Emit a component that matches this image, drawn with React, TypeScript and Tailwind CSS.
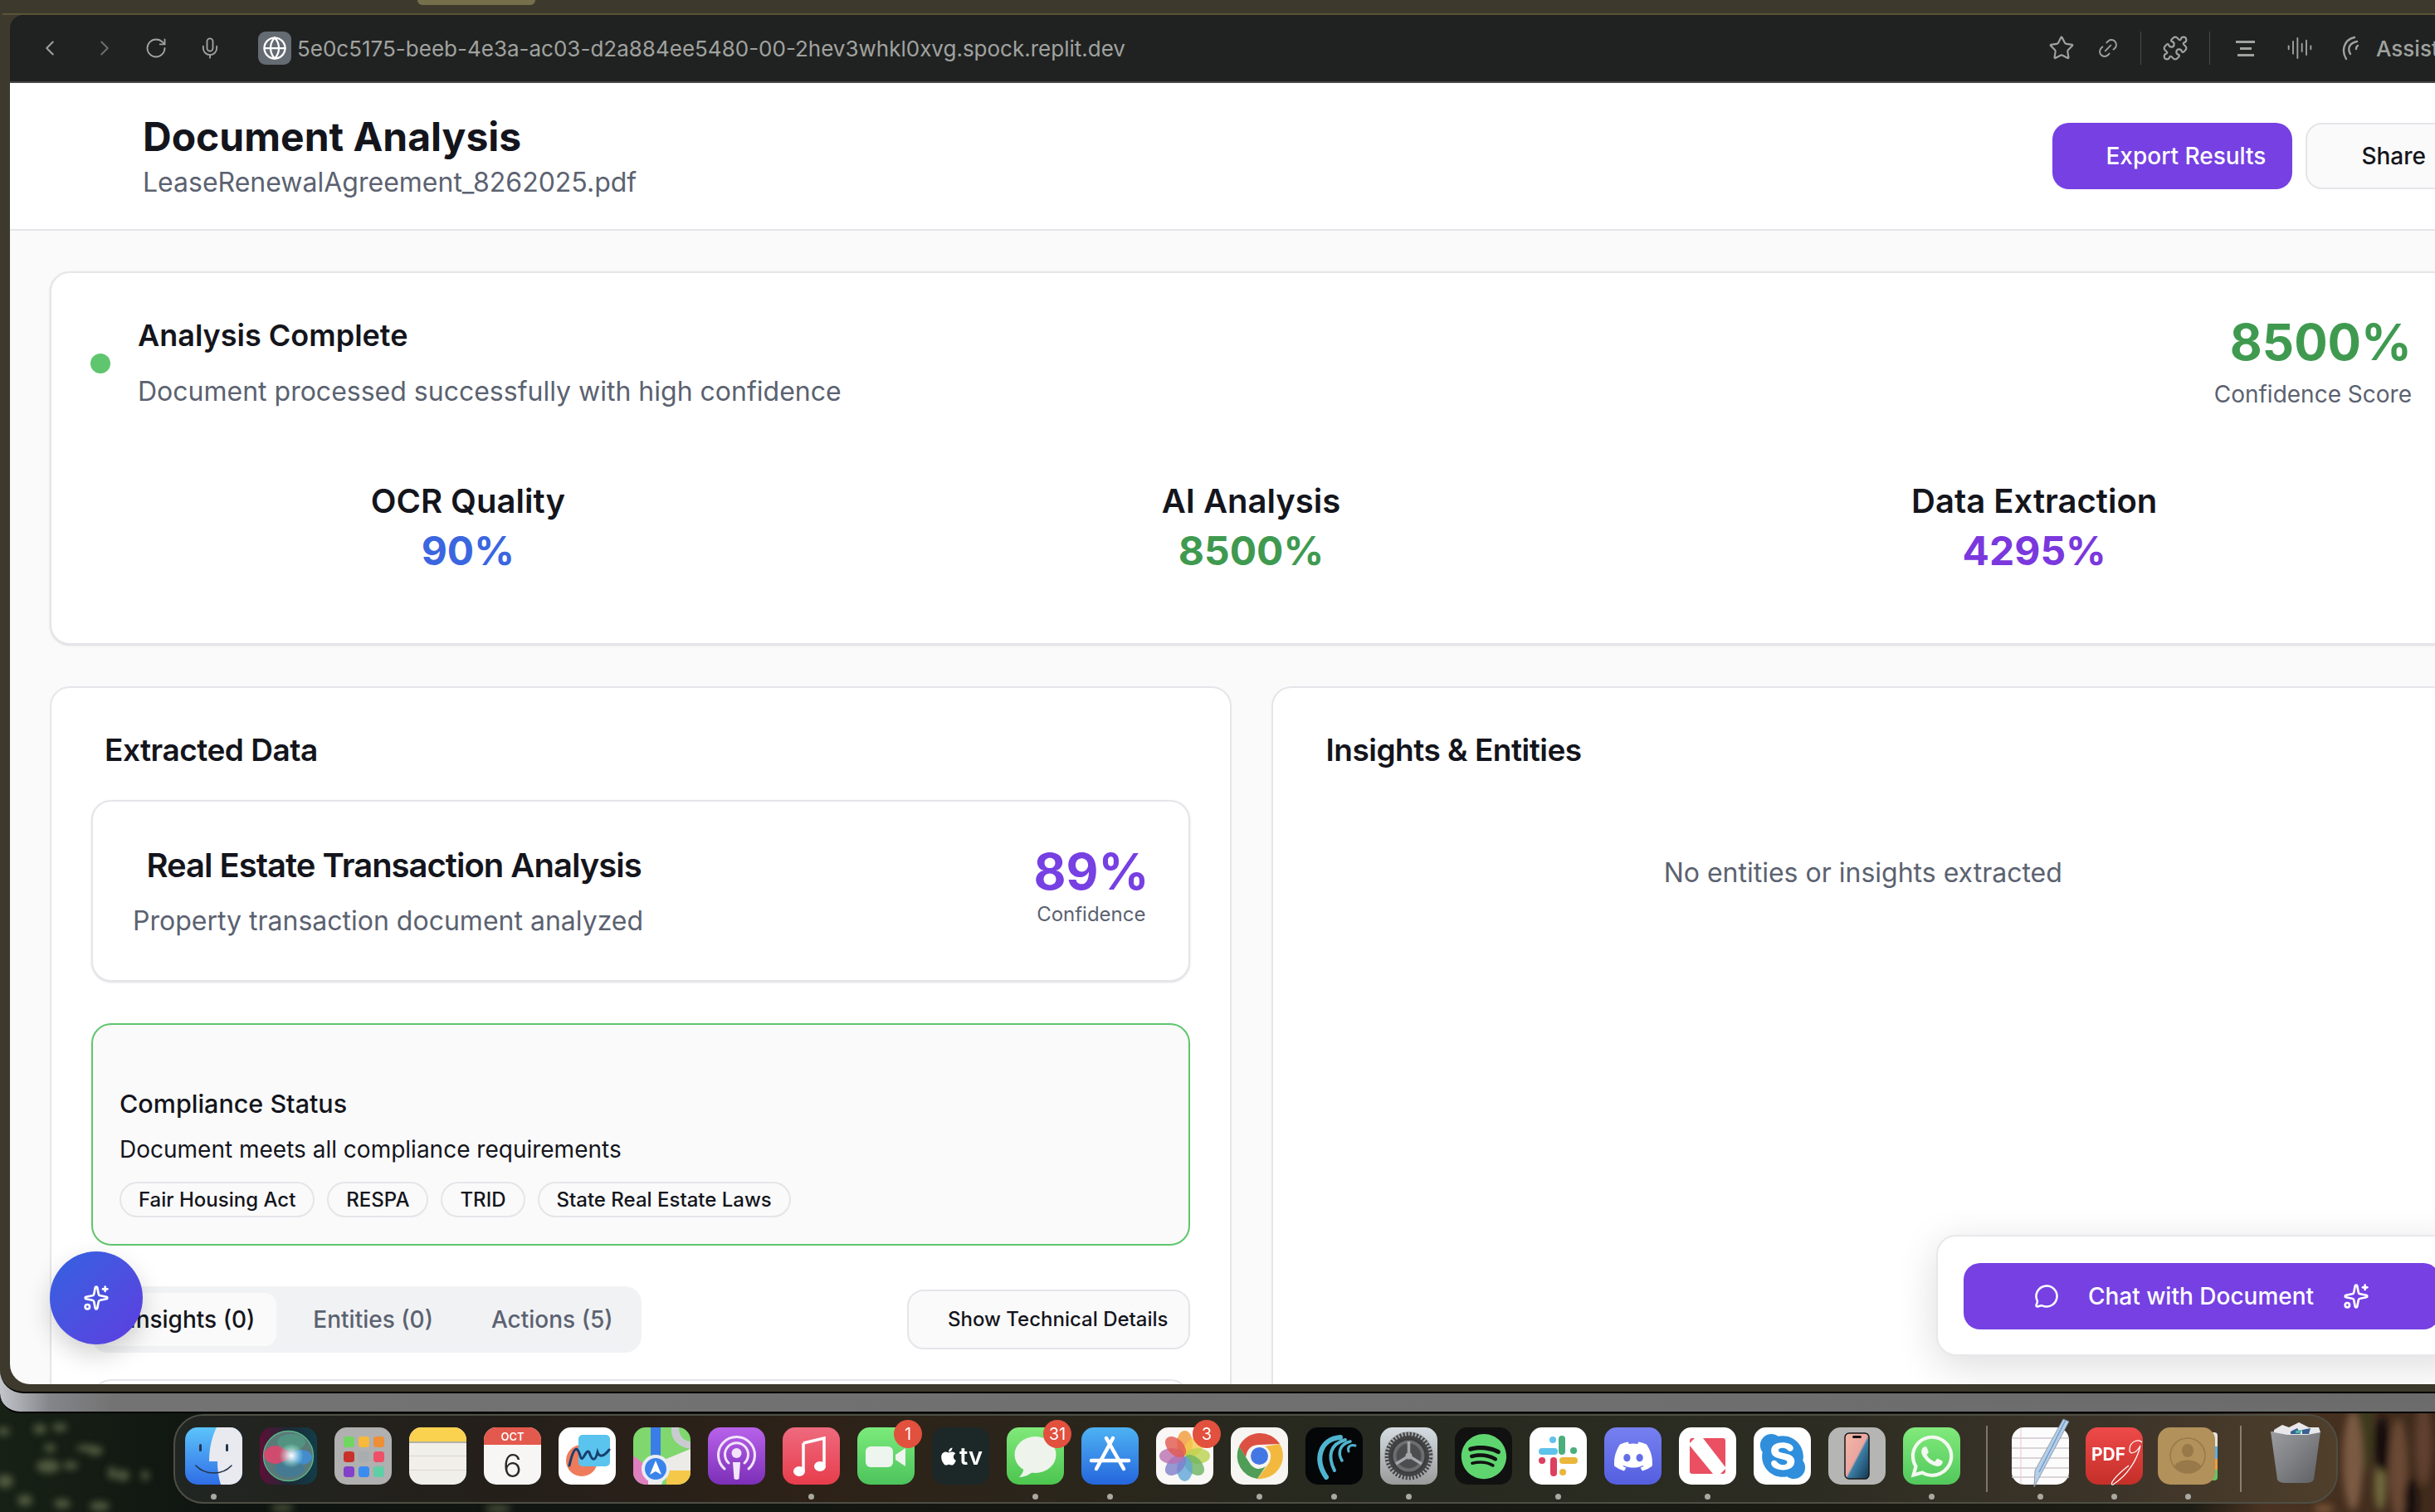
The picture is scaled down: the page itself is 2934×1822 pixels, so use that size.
import { FC, ReactNode } from "react";
import { AudioLines, ChevronLeft, ChevronRight, Globe, Link2, MessageCircle, Mic, Puzzle, RotateCw, Sparkles, Star } from "lucide-react";
import { FaApple, FaDiscord, FaSkype, FaSpotify, FaWhatsapp } from "react-icons/fa";

const Metric: FC<{ label: string; value: string; color: string }> = ({ label, value, color }) => (
  <div className="flex flex-col items-center">
    <div className="text-[40px] leading-[52px] font-semibold text-[#14151c]">{label}</div>
    <div className={`mt-[4px] text-[48px] leading-[60px] font-bold ${color}`}>{value}</div>
  </div>
);

const Chip: FC<{ children: ReactNode }> = ({ children }) => (
  <div className="h-[43px] px-[21px] flex items-center rounded-full border-2 border-[#e5e5ea] bg-[#fafafa] text-[24px] font-medium text-[#14151c]">{children}</div>
);

const Squircle: FC<{ children: ReactNode; fill?: string; defs?: ReactNode }> = ({ children, fill = "#fff", defs }) => (
  <svg viewBox="0 0 69 69" className="w-[69px] h-[69px] block overflow-visible">
    {defs && <defs>{defs}</defs>}
    <rect width="69" height="69" rx="15" fill={fill} />
    {children}
  </svg>
);

const Finder = () => (
  <Squircle fill="url(#fin)" defs={<linearGradient id="fin" x1="0" y1="0" x2="0" y2="1"><stop offset="0" stopColor="#5cc4fb" /><stop offset="1" stopColor="#2f6de6" /></linearGradient>}>
    <path d="M38 0H54a15 15 0 0 1 15 15V54a15 15 0 0 1-15 15H43C40 60 39 50 39 41H29C29 26 32 12 38 0Z" fill="#e9eaf0" />
    <rect x="17" y="20" width="3" height="9" rx="1.5" fill="#27344a" />
    <rect x="49" y="20" width="3" height="9" rx="1.5" fill="#27344a" />
    <path d="M13 46C24 58 45 58 56 46" fill="none" stroke="#27344a" strokeWidth="1.6" strokeLinecap="round" />
  </Squircle>
);

const Siri = () => (
  <Squircle fill="url(#sir)" defs={<><linearGradient id="sir" x1="0" y1="0" x2="1" y2="0"><stop offset="0" stopColor="#5e0f36" /><stop offset="0.5" stopColor="#1c2a35" /><stop offset="1" stopColor="#113d48" /></linearGradient><radialGradient id="sirg"><stop offset="0" stopColor="#fff" /><stop offset="0.35" stopColor="#e6f4ff" stopOpacity="0.7" /><stop offset="1" stopColor="#8fd" stopOpacity="0" /></radialGradient></>}>
    <circle cx="34.5" cy="34.5" r="30" fill="#5a7a78" stroke="#58b58c" strokeWidth="1.4" />
    <ellipse cx="20" cy="33" rx="15" ry="11" fill="#e5436c" opacity="0.85" />
    <ellipse cx="50" cy="36" rx="13" ry="9" fill="#3f8fdc" opacity="0.85" />
    <ellipse cx="36" cy="50" rx="18" ry="10" fill="#3c7c9c" opacity="0.7" />
    <ellipse cx="38" cy="18" rx="17" ry="10" fill="#4ca286" opacity="0.6" />
    <circle cx="38" cy="34" r="15" fill="url(#sirg)" />
  </Squircle>
);

const Launchpad = () => {
  const colors = ["#6fd75f", "#f6b93b", "#ee8f36", "#c7322a", "#a8aeb0", "#ee5068", "#8340c8", "#3b8cf0", "#5fcfa6"];
  return (
    <Squircle fill="#b0b0b0">
      {colors.map((c, i) => (
        <rect key={c} x={11 + (i % 3) * 18} y={11 + Math.floor(i / 3) * 18} width="13" height="13" rx="3.5" fill={c} />
      ))}
    </Squircle>
  );
};

const Notes = () => (
  <Squircle fill="#f1efe9">
    <path d="M0 17V15A15 15 0 0 1 15 0H54A15 15 0 0 1 69 15V17Z" fill="#fbd24f" />
    <rect y="17" width="69" height="2" fill="#b4b0a6" />
    <rect y="34" width="69" height="1" fill="#d9d6cf" />
    <rect y="51" width="69" height="1" fill="#d9d6cf" />
  </Squircle>
);

const Calendar = () => (
  <Squircle fill="#f7f6f4">
    <path d="M0 21V15A15 15 0 0 1 15 0H54A15 15 0 0 1 69 15V21Z" fill="#e4594d" />
    <text x="34.5" y="16" textAnchor="middle" fontSize="13" fontWeight="600" fill="#fff" fontFamily="Inter, sans-serif">OCT</text>
    <text x="34.5" y="60" textAnchor="middle" fontSize="38" fontWeight="300" fill="#2a2a2a" fontFamily="Inter, sans-serif">6</text>
  </Squircle>
);

const Freeform = () => (
  <Squircle fill="#fff">
    <circle cx="28" cy="40" r="19" fill="#ee7b5c" />
    <rect x="24" y="9" width="38" height="38" rx="5" fill="#5ac4ee" />
    <path d="M13 46C19 20 23 24 26 34C29 46 33 24 37 30C40 40 44 42 47 30C49 36 54 36 61 27" fill="none" stroke="#173f6e" strokeWidth="3" strokeLinecap="round" />
  </Squircle>
);

const Maps = () => (
  <Squircle fill="#7fd76e">
    <path d="M0 34L18 48V69H15A15 15 0 0 1 0 54Z" fill="#e07fc0" />
    <path d="M40 52H69V54A15 15 0 0 1 54 69H40Z" fill="#f5c84a" />
    <path d="M30 42L69 26V52H40L34 69H18V48Z" fill="#ecebe8" />
    <path d="M46 0V4C46 16 56 24 69 26V17C60 16 55 10 55 0Z" fill="#c9cbd1" />
    <rect x="21" y="0" width="12" height="38" fill="#3a7ce8" />
    <circle cx="27" cy="50" r="17" fill="#e9edf4" />
    <circle cx="27" cy="50" r="13" fill="#3a83ea" />
    <path d="M27 40L34 57L27 53L20 57Z" fill="#fff" />
  </Squircle>
);

const Podcasts = () => (
  <Squircle fill="url(#pod)" defs={<linearGradient id="pod" x1="0" y1="0" x2="0" y2="1"><stop offset="0" stopColor="#b862ea" /><stop offset="1" stopColor="#7c2fb8" /></linearGradient>}>
    <g fill="none" stroke="#f3e6fb" strokeWidth="3" strokeLinecap="round">
      <path d="M20 50A22 22 0 1 1 49 50" />
      <path d="M25 43A14 14 0 1 1 44 43" />
    </g>
    <circle cx="34.5" cy="31" r="6" fill="#f3e6fb" />
    <path d="M30 42H39L37.5 62Q34.5 64 31.5 62Z" fill="#f3e6fb" />
  </Squircle>
);

const Music = () => (
  <Squircle fill="url(#mus)" defs={<linearGradient id="mus" x1="0" y1="0" x2="0" y2="1"><stop offset="0" stopColor="#ef6a7e" /><stop offset="1" stopColor="#e73d4c" /></linearGradient>}>
    <path d="M25 19L50 13V45" fill="none" stroke="#fff" strokeWidth="3.5" />
    <path d="M25 19V52" fill="none" stroke="#fff" strokeWidth="3.5" />
    <ellipse cx="20" cy="53" rx="7" ry="6" fill="#fff" />
    <ellipse cx="45" cy="47" rx="7" ry="6" fill="#fff" />
  </Squircle>
);

const FaceTime = () => (
  <Squircle fill="url(#ft)" defs={<linearGradient id="ft" x1="0" y1="0" x2="0" y2="1"><stop offset="0" stopColor="#7bea7b" /><stop offset="1" stopColor="#4cc45c" /></linearGradient>}>
    <rect x="10" y="23" width="33" height="25" rx="6" fill="#eef4ee" />
    <path d="M46 33L58 25V47L46 39Z" fill="#eef4ee" />
  </Squircle>
);

const TV = () => (
  <Squircle fill="#1c2727">
    <foreignObject x="0" y="0" width="69" height="69">
      <div className="w-[69px] h-[69px] flex items-center justify-center gap-[1px] text-white text-[29px] font-semibold leading-none">
        <FaApple className="w-[24px] h-[24px]" />
        <span>tv</span>
      </div>
    </foreignObject>
  </Squircle>
);

const Messages = () => (
  <Squircle fill="url(#ms)" defs={<linearGradient id="ms" x1="0" y1="0" x2="0" y2="1"><stop offset="0" stopColor="#80e97a" /><stop offset="1" stopColor="#4cc54f" /></linearGradient>}>
    <ellipse cx="34.5" cy="33" rx="25" ry="22" fill="#eef3ec" />
    <path d="M21 48C20 54 18 57 15 60C22 60 27 57 31 54Z" fill="#eef3ec" />
  </Squircle>
);

const AppStore = () => (
  <Squircle fill="url(#as)" defs={<linearGradient id="as" x1="0" y1="0" x2="0" y2="1"><stop offset="0" stopColor="#4db2f3" /><stop offset="1" stopColor="#2566dd" /></linearGradient>}>
    <g stroke="#fff" strokeWidth="4.5" strokeLinecap="round">
      <path d="M38 13L18 50" />
      <path d="M30 13L51 50" />
      <path d="M12 40H57" />
    </g>
  </Squircle>
);

const Photos = () => {
  const petals = ["#f29a3a", "#f5c94c", "#b9d24e", "#6cb35f", "#5fa5d8", "#7d7ecb", "#b96fb2", "#e2574f"];
  return (
    <Squircle fill="#f9f8f6">
      {petals.map((c, i) => (
        <ellipse key={c} cx="34.5" cy="19" rx="9.5" ry="15" fill={c} opacity="0.8" transform={`rotate(${i * 45} 34.5 34.5)`} />
      ))}
    </Squircle>
  );
};

const Chrome = () => (
  <Squircle fill="#f6f5f2">
    <path d="M10 23A28 28 0 0 1 59 20L34.5 21Q20 21 18 36Z" fill="#dd5142" />
    <path d="M10 23L24 45Q32 54 42 47L32 62A28 28 0 0 1 10 23Z" fill="#4f9d56" />
    <path d="M59 20A28 28 0 0 1 32 62L46 43Q52 30 41 23Z" fill="#f3b93f" />
    <circle cx="34.5" cy="34.5" r="13" fill="#f6f5f2" />
    <circle cx="34.5" cy="34.5" r="10.5" fill="#4378e4" />
  </Squircle>
);

const Wave = () => (
  <Squircle fill="#050608">
    <g fill="none" stroke="#4fb4cf" strokeLinecap="round">
      <path d="M25 60C10 38 18 14 42 12" strokeWidth="6" />
      <path d="M35 52C26 34 30 20 48 15" strokeWidth="4" />
      <path d="M44 40C38 30 42 20 54 17" strokeWidth="3.5" />
      <path d="M52 29C50 24 54 20 60 22" strokeWidth="3" />
    </g>
  </Squircle>
);

const Settings = () => (
  <Squircle fill="url(#set)" defs={<linearGradient id="set" x1="0" y1="0" x2="0" y2="1"><stop offset="0" stopColor="#d5dde2" /><stop offset="1" stopColor="#9a9a9a" /></linearGradient>}>
    <circle cx="34.5" cy="34.5" r="29" fill="#414345" />
    <circle cx="34.5" cy="34.5" r="27" fill="none" stroke="#a7a9ab" strokeWidth="5" strokeDasharray="2 2.2" />
    <circle cx="34.5" cy="34.5" r="20" fill="#6b6d6f" stroke="#3a3b3d" strokeWidth="2" />
    <circle cx="34.5" cy="34.5" r="15" fill="#4b4d4f" />
    <g stroke="#a5a7a9" strokeWidth="3.5">
      <path d="M34.5 34.5V17" />
      <path d="M34.5 34.5L50 44" />
      <path d="M34.5 34.5L19 44" />
    </g>
    <circle cx="34.5" cy="34.5" r="4" fill="#a5a7a9" />
  </Squircle>
);

const Spotify = () => (
  <Squircle fill="#111">
    <foreignObject x="0" y="0" width="69" height="69">
      <div className="w-[69px] h-[69px] flex items-center justify-center text-[#5fd56f]"><FaSpotify className="w-[56px] h-[56px]" /></div>
    </foreignObject>
  </Squircle>
);

const Slack = () => (
  <Squircle fill="#fff">
    <g strokeLinecap="round" strokeWidth="8" fill="none">
      <path d="M15 29H30" stroke="#5fc2ea" />
      <path d="M28 15V15.1" stroke="#5fc2ea" />
      <path d="M39 14V29" stroke="#4aae7d" />
      <path d="M53 28H53.1" stroke="#4aae7d" />
      <path d="M40 40H54" stroke="#eab63c" />
      <path d="M40 54H40.1" stroke="#eab63c" />
      <path d="M29 40V55" stroke="#dd3f5f" />
      <path d="M15 40H15.1" stroke="#dd3f5f" />
    </g>
  </Squircle>
);

const Discord = () => (
  <Squircle fill="url(#dis)" defs={<linearGradient id="dis" x1="0" y1="0" x2="0" y2="1"><stop offset="0" stopColor="#7680f0" /><stop offset="1" stopColor="#545fe0" /></linearGradient>}>
    <foreignObject x="0" y="0" width="69" height="69">
      <div className="w-[69px] h-[69px] flex items-center justify-center text-white"><FaDiscord className="w-[50px] h-[50px]" /></div>
    </foreignObject>
  </Squircle>
);

const News = () => (
  <Squircle fill="#fff">
    <rect x="13" y="13" width="43" height="43" rx="3" fill="#ea5062" />
    <path d="M13 19L19 13H29L56 48V50L50 56H41L13 22Z" fill="#fff" />
  </Squircle>
);

const Skype = () => (
  <Squircle fill="#fff">
    <foreignObject x="0" y="0" width="69" height="69">
      <div className="w-[69px] h-[69px] flex items-center justify-center text-[#2f8fdc]"><FaSkype className="w-[62px] h-[62px]" /></div>
    </foreignObject>
  </Squircle>
);

const Mirroring = () => (
  <Squircle fill="#b5b5b3" defs={<linearGradient id="mir" x1="0" y1="0" x2="1" y2="1"><stop offset="0" stopColor="#f5b7a4" /><stop offset="0.5" stopColor="#e9a6a0" /><stop offset="0.55" stopColor="#3c7fa6" /><stop offset="1" stopColor="#12344f" /></linearGradient>}>
    <rect x="20" y="7" width="29" height="55" rx="5" fill="url(#mir)" stroke="#16181b" strokeWidth="1.5" />
    <rect x="29" y="10" width="11" height="3" rx="1.5" fill="#111" />
  </Squircle>
);

const WhatsApp = () => (
  <Squircle fill="url(#wa)" defs={<linearGradient id="wa" x1="0" y1="0" x2="0" y2="1"><stop offset="0" stopColor="#81ea7b" /><stop offset="1" stopColor="#52c85c" /></linearGradient>}>
    <foreignObject x="0" y="0" width="69" height="69">
      <div className="w-[69px] h-[69px] flex items-center justify-center text-[#f3f8f0]"><FaWhatsapp className="w-[58px] h-[58px]" /></div>
    </foreignObject>
  </Squircle>
);

const TextEdit = () => (
  <Squircle fill="#fdfcfd">
    <g stroke="#cfc6cc" strokeWidth="1.3">
      <path d="M0 13H69M0 25H69M0 37H69M0 49H69M0 60H69" />
    </g>
    <path d="M11 0V69" stroke="#edc6cc" strokeWidth="1" />
    <path d="M62 -10L69 -7L36 55L27 72L28 52Z" fill="#b6cfe6" stroke="#7d8b9b" strokeWidth="0.8" />
    <path d="M65 -9L33 54" stroke="#6f9dd0" strokeWidth="1.5" />
  </Squircle>
);

const PdfIcon = () => (
  <Squircle fill="url(#pdf)" defs={<linearGradient id="pdf" x1="0" y1="0" x2="0" y2="1"><stop offset="0" stopColor="#ee4a4a" /><stop offset="1" stopColor="#c42f28" /></linearGradient>}>
    <text x="7" y="40" fontSize="21" fontWeight="700" fill="#fff" fontFamily="Inter, sans-serif">PDF</text>
    <path d="M68 18C64 14 54 16 53 26C52 33 60 33 66 22C62 40 50 58 33 69C28 70 34 60 52 46" fill="none" stroke="#fff" strokeWidth="1.2" />
  </Squircle>
);

const Contacts = () => (
  <div className="relative w-[72px] h-[69px]">
    <div className="absolute right-0 top-[6px] w-[10px] h-[58px] rounded-r-[4px] bg-[linear-gradient(180deg,#e6e2da_0_30%,#5aaee8_30%_55%,#ef9a3d_55%_78%,#66c266_78%)]" />
    <svg viewBox="0 0 69 69" className="absolute left-0 top-0 w-[69px] h-[69px]">
      <rect width="69" height="69" rx="15" fill="#b3915a" />
      <circle cx="36" cy="34" r="21" fill="none" stroke="#98794a" strokeWidth="1.5" />
      <ellipse cx="36" cy="28" rx="7" ry="8" fill="#98794a" />
      <path d="M20 47C24 37 48 37 52 47C47 57 25 57 20 47Z" fill="#98794a" />
    </svg>
  </div>
);

const Trash = () => (
  <svg viewBox="0 0 61 78" className="w-[61px] h-[78px] block -mt-[9px]">
    <defs>
      <linearGradient id="trash" x1="0" y1="0" x2="1" y2="1"><stop offset="0" stopColor="#9b9ea1" /><stop offset="0.5" stopColor="#7d7f82" /><stop offset="1" stopColor="#5d5f62" /></linearGradient>
    </defs>
    <path d="M0 14H60L52 72Q50 76 42 76H18Q10 76 8 72Z" fill="url(#trash)" />
    <path d="M4 12L14 6L22 9L34 3L46 9L58 9L60 15L44 18L20 18L4 15Z" fill="#e8e8ea" />
    <path d="M24 14L32 10L36 17H24ZM38 12L48 10L46 17H38Z" fill="#3a5f92" />
    <path d="M30 13L38 12L36 16H30Z" fill="#4bb6a4" />
  </svg>
);

const dock = [
  { key: "finder", icon: <Finder />, dot: true },
  { key: "siri", icon: <Siri /> },
  { key: "launchpad", icon: <Launchpad /> },
  { key: "notes", icon: <Notes /> },
  { key: "calendar", icon: <Calendar /> },
  { key: "freeform", icon: <Freeform /> },
  { key: "maps", icon: <Maps /> },
  { key: "podcasts", icon: <Podcasts /> },
  { key: "music", icon: <Music />, dot: true },
  { key: "facetime", icon: <FaceTime />, badge: "1" },
  { key: "tv", icon: <TV /> },
  { key: "messages", icon: <Messages />, dot: true, badge: "31" },
  { key: "appstore", icon: <AppStore />, dot: true },
  { key: "photos", icon: <Photos />, badge: "3" },
  { key: "chrome", icon: <Chrome />, dot: true },
  { key: "wave", icon: <Wave />, dot: true },
  { key: "settings", icon: <Settings />, dot: true },
  { key: "spotify", icon: <Spotify /> },
  { key: "slack", icon: <Slack />, dot: true },
  { key: "discord", icon: <Discord /> },
  { key: "news", icon: <News />, dot: true },
  { key: "skype", icon: <Skype /> },
  { key: "mirroring", icon: <Mirroring /> },
  { key: "whatsapp", icon: <WhatsApp />, dot: true },
];

const DockItem: FC<{ icon: ReactNode; dot?: boolean; badge?: string }> = ({ icon, dot, badge }) => (
  <div className="relative flex flex-col items-center shrink-0">
    {icon}
    <div className={`mt-[11px] w-[7px] h-[7px] rounded-full ${dot ? "bg-[#a9a9a2]" : "bg-transparent"}`} />
    {badge && (
      <div className="absolute -top-[9px] -right-[9px] w-[34px] h-[34px] rounded-full bg-[#e2503e] text-white text-[20px] flex items-center justify-center">{badge}</div>
    )}
  </div>
);

const leaves = [
  [4, 1725, 8, 5], [48, 1722, 8, 6], [72, 1720, 9, 5], [60, 1745, 7, 5], [102, 1745, 10, 4], [115, 1748, 9, 6],
  [58, 1767, 14, 8], [85, 1766, 9, 5], [6, 1785, 10, 8], [135, 1775, 5, 8], [148, 1778, 8, 7], [175, 1778, 5, 6],
  [30, 1808, 9, 7], [75, 1812, 10, 6], [120, 1815, 12, 6], [340, 1817, 14, 4], [600, 1818, 16, 4],
];

const bark = [
  [2850, 1725, 9, 50, "#3d3a1f"], [2835, 1760, 12, 60, "#7a5a42"], [2890, 1770, 11, 60, "#6b4a36"], [2868, 1790, 7, 30, "#6f6a3c"],
  [2800, 1818, 12, 5, "#7a5638"], [2920, 1740, 10, 50, "#61402e"], [2870, 1740, 9, 34, "#120b08"], [2905, 1810, 8, 30, "#120b08"],
];

const Wallpaper = () => (
  <svg viewBox="0 0 2934 1822" className="absolute inset-0 w-full h-full">
    <defs>
      <filter id="soft" x="-50%" y="-50%" width="200%" height="200%"><feGaussianBlur stdDeviation="4" /></filter>
      <linearGradient id="wp" x1="0" y1="0" x2="1" y2="0">
        <stop offset="0" stopColor="#182116" />
        <stop offset="0.1" stopColor="#0e1410" />
        <stop offset="0.45" stopColor="#151812" />
        <stop offset="0.9" stopColor="#1d1c14" />
        <stop offset="0.93" stopColor="#4a3322" />
        <stop offset="1" stopColor="#3f2a1b" />
      </linearGradient>
    </defs>
    <rect width="2934" height="1822" fill="url(#wp)" />
    <g filter="url(#soft)">
      {leaves.map(([x, y, rx, ry]) => (
        <ellipse key={`${x}-${y}`} cx={x} cy={y} rx={rx} ry={ry} fill="#76825a" opacity="0.6" />
      ))}
    </g>
    <g filter="url(#soft)">
      {bark.map(([x, y, rx, ry, c]) => (
        <ellipse key={`${x}-${y}`} cx={x as number} cy={y as number} rx={rx as number} ry={ry as number} fill={c as string} />
      ))}
    </g>
  </svg>
);

const App: FC = () => {
  return (
    <div className="relative w-[2934px] h-[1822px] overflow-hidden bg-[#111511] [font-family:Inter,sans-serif]">
      <Wallpaper />

      <div className="relative h-[1703px] rounded-bl-[24px] border-b-2 border-black bg-[linear-gradient(90deg,#c2c5ca_0,#84858a_60px,#737373_135px,#6c6c6c_100%)]">
        <div className="h-[1679px] pl-[3px] rounded-bl-[28px] border-b-2 border-black bg-[#3d3a2d] flex flex-col">
          <div className="h-[16px] shrink-0 ml-[500px]">
            <div className="w-[142px] h-[6px] rounded-b-[8px] bg-[#75704a]" />
          </div>
          <div className="flex flex-1 min-h-0 flex-col pl-[9px] pb-[9px] border-t-2 border-[#5a5436]">
            {/* browser toolbar */}
            <div className="h-[82px] shrink-0 flex items-center rounded-tl-[16px] border-b-2 border-[#474847] bg-[#202221] text-[#a0a2a0]">
              <ChevronLeft className="ml-[33px] w-[30px] h-[34px] stroke-[1.6]" />
              <ChevronRight className="ml-[36px] w-[30px] h-[34px] stroke-[1.6] text-[#6c6e6c]" />
              <RotateCw className="ml-[33px] w-[28px] h-[30px] stroke-[1.6]" />
              <Mic className="ml-[37px] w-[28px] h-[34px] stroke-[1.6]" />
              <div className="ml-[44px] w-[40px] h-[40px] rounded-[9px] bg-[#656b72] flex items-center justify-center">
                <Globe className="w-[30px] h-[30px] text-white stroke-[1.8]" />
              </div>
              <div className="ml-[7px] text-[26px] text-[#a0a2a0] whitespace-nowrap">5e0c5175-beeb-4e3a-ac03-d2a884ee5480-00-2hev3whkl0xvg.spock.replit.dev</div>
              <div className="ml-auto flex items-center shrink-0">
                <Star className="w-[32px] h-[32px] stroke-[1.6]" />
                <Link2 className="ml-[26px] w-[28px] h-[28px] -rotate-45 stroke-[1.6]" />
                <div className="ml-[25px] w-[1px] h-[40px] bg-[#4a4b4a]" />
                <Puzzle className="ml-[25px] w-[32px] h-[32px] stroke-[1.6]" />
                <div className="ml-[25px] w-[1px] h-[40px] bg-[#4a4b4a]" />
                <div className="ml-[31px] w-[23px] flex flex-col items-center gap-[5px]">
                  <div className="w-[23px] h-[3px] bg-[#a0a2a0]" />
                  <div className="w-[14px] h-[3px] bg-[#a0a2a0]" />
                  <div className="w-[20px] h-[3px] bg-[#a0a2a0]" />
                </div>
                <AudioLines className="ml-[38px] w-[32px] h-[32px] stroke-[1.4]" />
                <svg viewBox="0 0 28 30" className="ml-[34px] w-[28px] h-[30px]" fill="none" stroke="#a0a2a0" strokeWidth="2.4" strokeLinecap="round">
                  <path d="M6 28C0 18 3 5 16 2" />
                  <path d="M11 22C7 15 10 9 19 7" />
                  <path d="M20 12C18 13 18 14 18 16" />
                </svg>
                <div className="ml-[14px] w-[71px] overflow-hidden text-[26px] font-medium whitespace-nowrap">Assistant</div>
              </div>
            </div>

            {/* page */}
            <div className="flex-1 min-h-0 overflow-hidden rounded-bl-[24px] bg-[#fafafa]">
              <div className="w-[2992px]">
                <header className="h-[178px] bg-white border-b-2 border-[#e5e5ea] flex items-center pl-[160px] pr-[47px]">
                  <div className="flex flex-col">
                    <h1 className="text-[48px] leading-[60px] font-bold text-[#14151c]">Document Analysis</h1>
                    <p className="mt-[3px] text-[32px] leading-[44px] text-[#5b6270]">LeaseRenewalAgreement_8262025.pdf</p>
                  </div>
                  <div className="ml-auto flex items-center gap-[16px]">
                    <button className="h-[80px] pl-[64px] pr-[32px] rounded-[20px] bg-[#7640e3] text-white text-[28px] font-medium">Export Results</button>
                    <button className="h-[80px] pl-[65px] pr-[32px] rounded-[20px] border-2 border-[#e5e5ea] bg-[#fafafa] text-[#14151c] text-[28px] font-medium">Share</button>
                  </div>
                </header>

                <main className="pl-[48px] pr-[49px] pt-[49px] flex flex-col gap-[50px]">
                  <section className="h-[450px] rounded-[24px] border-2 border-[#e5e5ea] bg-white shadow-sm px-[47px] pt-[49px]">
                    <div className="flex justify-between items-center">
                      <div className="flex items-center gap-[33px]">
                        <div className="w-[24px] h-[24px] rounded-full bg-[#5fc56e]" />
                        <div>
                          <div className="text-[36px] leading-[48px] font-semibold text-[#14151c]">Analysis Complete</div>
                          <div className="mt-[20px] text-[32px] leading-[48px] text-[#5b6270]">Document processed successfully with high confidence</div>
                        </div>
                      </div>
                      <div className="flex flex-col items-end -mt-[2px]">
                        <div className="text-[60px] leading-[72px] font-bold text-[#3f9a50]">8500%</div>
                        <div className="mt-[5px] text-[28px] leading-[44px] text-[#5b6270]">Confidence Score</div>
                      </div>
                    </div>
                    <div className="mt-[81px] grid grid-cols-3 gap-[34px]">
                      <Metric label="OCR Quality" value="90%" color="text-[#3b66e0]" />
                      <Metric label="AI Analysis" value="8500%" color="text-[#3f9a50]" />
                      <Metric label="Data Extraction" value="4295%" color="text-[#7a38dd]" />
                    </div>
                  </section>

                  <div className="grid grid-cols-2 gap-[48px]">
                    <section className="rounded-[24px] border-2 border-[#e5e5ea] bg-white pl-[48px] pr-[48px] pt-[51px]">
                      <h2 className="pl-[16px] text-[37px] leading-[48px] font-semibold text-[#14151c] tracking-[-0.5px]">Extracted Data</h2>

                      <div className="mt-[36px] h-[219px] rounded-[24px] border-2 border-[#e5e5ea] bg-white shadow-sm flex justify-between pl-[48px] pr-[51px] pt-[49px]">
                        <div className="text-center">
                          <div className="pl-[14px] text-[40px] leading-[56px] font-semibold text-[#14151c] tracking-[-1px]">Real Estate Transaction Analysis</div>
                          <div className="mt-[17px] text-[32px] leading-[44px] text-[#5b6270]">Property transaction document analyzed</div>
                        </div>
                        <div className="flex flex-col items-end -mt-[3px]">
                          <div className="-mr-[4px] text-[60px] leading-[76px] font-bold text-[#7640e3]">89%</div>
                          <div className="-mt-[4px] text-[24px] leading-[36px] text-[#5b6270]">Confidence</div>
                        </div>
                      </div>

                      <div className="mt-[50px] h-[268px] rounded-[24px] border-2 border-[#5fc56e] bg-[#fafafa] pl-[32px] pt-[73px]">
                        <div className="text-[30.5px] leading-[44px] font-medium text-[#14151c]">Compliance Status</div>
                        <div className="mt-[13px] text-[28px] leading-[40px] text-[#14151c]">Document meets all compliance requirements</div>
                        <div className="mt-[19px] flex gap-[15px]">
                          <Chip>Fair Housing Act</Chip>
                          <Chip>RESPA</Chip>
                          <Chip>TRID</Chip>
                          <Chip>State Real Estate Laws</Chip>
                        </div>
                      </div>

                      <div className="mt-[49px] flex items-center justify-between">
                        <div className="h-[80px] pl-[10px] pr-[8px] rounded-[20px] bg-[#f1f2f4] flex items-center gap-[18px] text-[28px] font-medium text-[#5b6270]">
                          <div className="h-[64px] pl-[36px] pr-[26px] flex items-center rounded-[14px] bg-[#fafafa] text-[#14151c]">Insights (0)</div>
                          <div className="px-[26px]">Entities (0)</div>
                          <div className="px-[26px]">Actions (5)</div>
                        </div>
                        <button className="h-[72px] pl-[47px] pr-[24px] rounded-[20px] border-2 border-[#e5e5ea] bg-[#fafafa] text-[24px] font-medium text-[#14151c]">Show Technical Details</button>
                      </div>

                      <div className="mt-[32px] h-[100px] rounded-t-[24px] border-2 border-[#e5e5ea] bg-white" />
                    </section>

                    <section className="rounded-[24px] border-2 border-[#e5e5ea] bg-white pl-[64px] pr-[50px] pt-[51px] pb-[900px]">
                      <h2 className="text-[37px] leading-[48px] font-semibold text-[#14151c] tracking-[-0.5px]">Insights &amp; Entities</h2>
                      <p className="mt-[100px] pr-[11px] text-center text-[32px] leading-[48px] text-[#5b6270]">No entities or insights extracted</p>
                    </section>
                  </div>
                </main>
              </div>
            </div>
          </div>
        </div>
      </div>

      {/* floating actions */}
      <div className="absolute left-[60px] top-[1508px] w-[112px] h-[112px] rounded-full bg-gradient-to-br from-[#2f62e0] to-[#5c3ce0] shadow-[0_12px_30px_rgba(0,0,0,0.18)] flex items-center justify-center">
        <Sparkles className="w-[32px] h-[32px] text-white" />
      </div>
      <div className="absolute left-[2333px] top-[1488px] w-[640px] h-[146px] rounded-[24px] border-2 border-[#e8e8ec] bg-white shadow-[0_12px_50px_rgba(0,0,0,0.14)] pl-[31px] pt-[32px]">
        <button className="w-[574px] h-[80px] rounded-[20px] bg-[#7640e3] text-white text-[28px] font-medium flex items-center justify-center gap-[35px]">
          <MessageCircle className="w-[30px] h-[30px]" />
          Chat with Document
          <Sparkles className="w-[32px] h-[32px]" />
        </button>
      </div>

      {/* dock */}
      <div className="relative ml-[209px] mt-[1px] w-[2608px] h-[108px] rounded-[36px] border-2 border-[#4e4e44] bg-[linear-gradient(90deg,#212622_0,#241f1a_14%,#2e2218_30%,#272a20_55%,#2c2c22_75%,#3d3429_90%,#4f3f2b_100%)] pl-[12px] pt-[14px] flex items-start gap-[21px]">
        {dock.map((d) => (
          <DockItem key={d.key} icon={d.icon} dot={d.dot} badge={d.badge} />
        ))}
        <div className="ml-[10px] mr-[8px] -mt-[2px] w-[2px] h-[80px] bg-[#7b776c]" />
        <DockItem icon={<TextEdit />} dot />
        <div className="-ml-[1px]"><DockItem icon={<PdfIcon />} dot /></div>
        <div className="-ml-[3px]"><DockItem icon={<Contacts />} dot /></div>
        <div className="ml-[6px] -mt-[2px] w-[2px] h-[80px] bg-[#8a8068]" />
        <div className="ml-[14px]"><DockItem icon={<Trash />} /></div>
      </div>
    </div>
  );
};

export default App;
